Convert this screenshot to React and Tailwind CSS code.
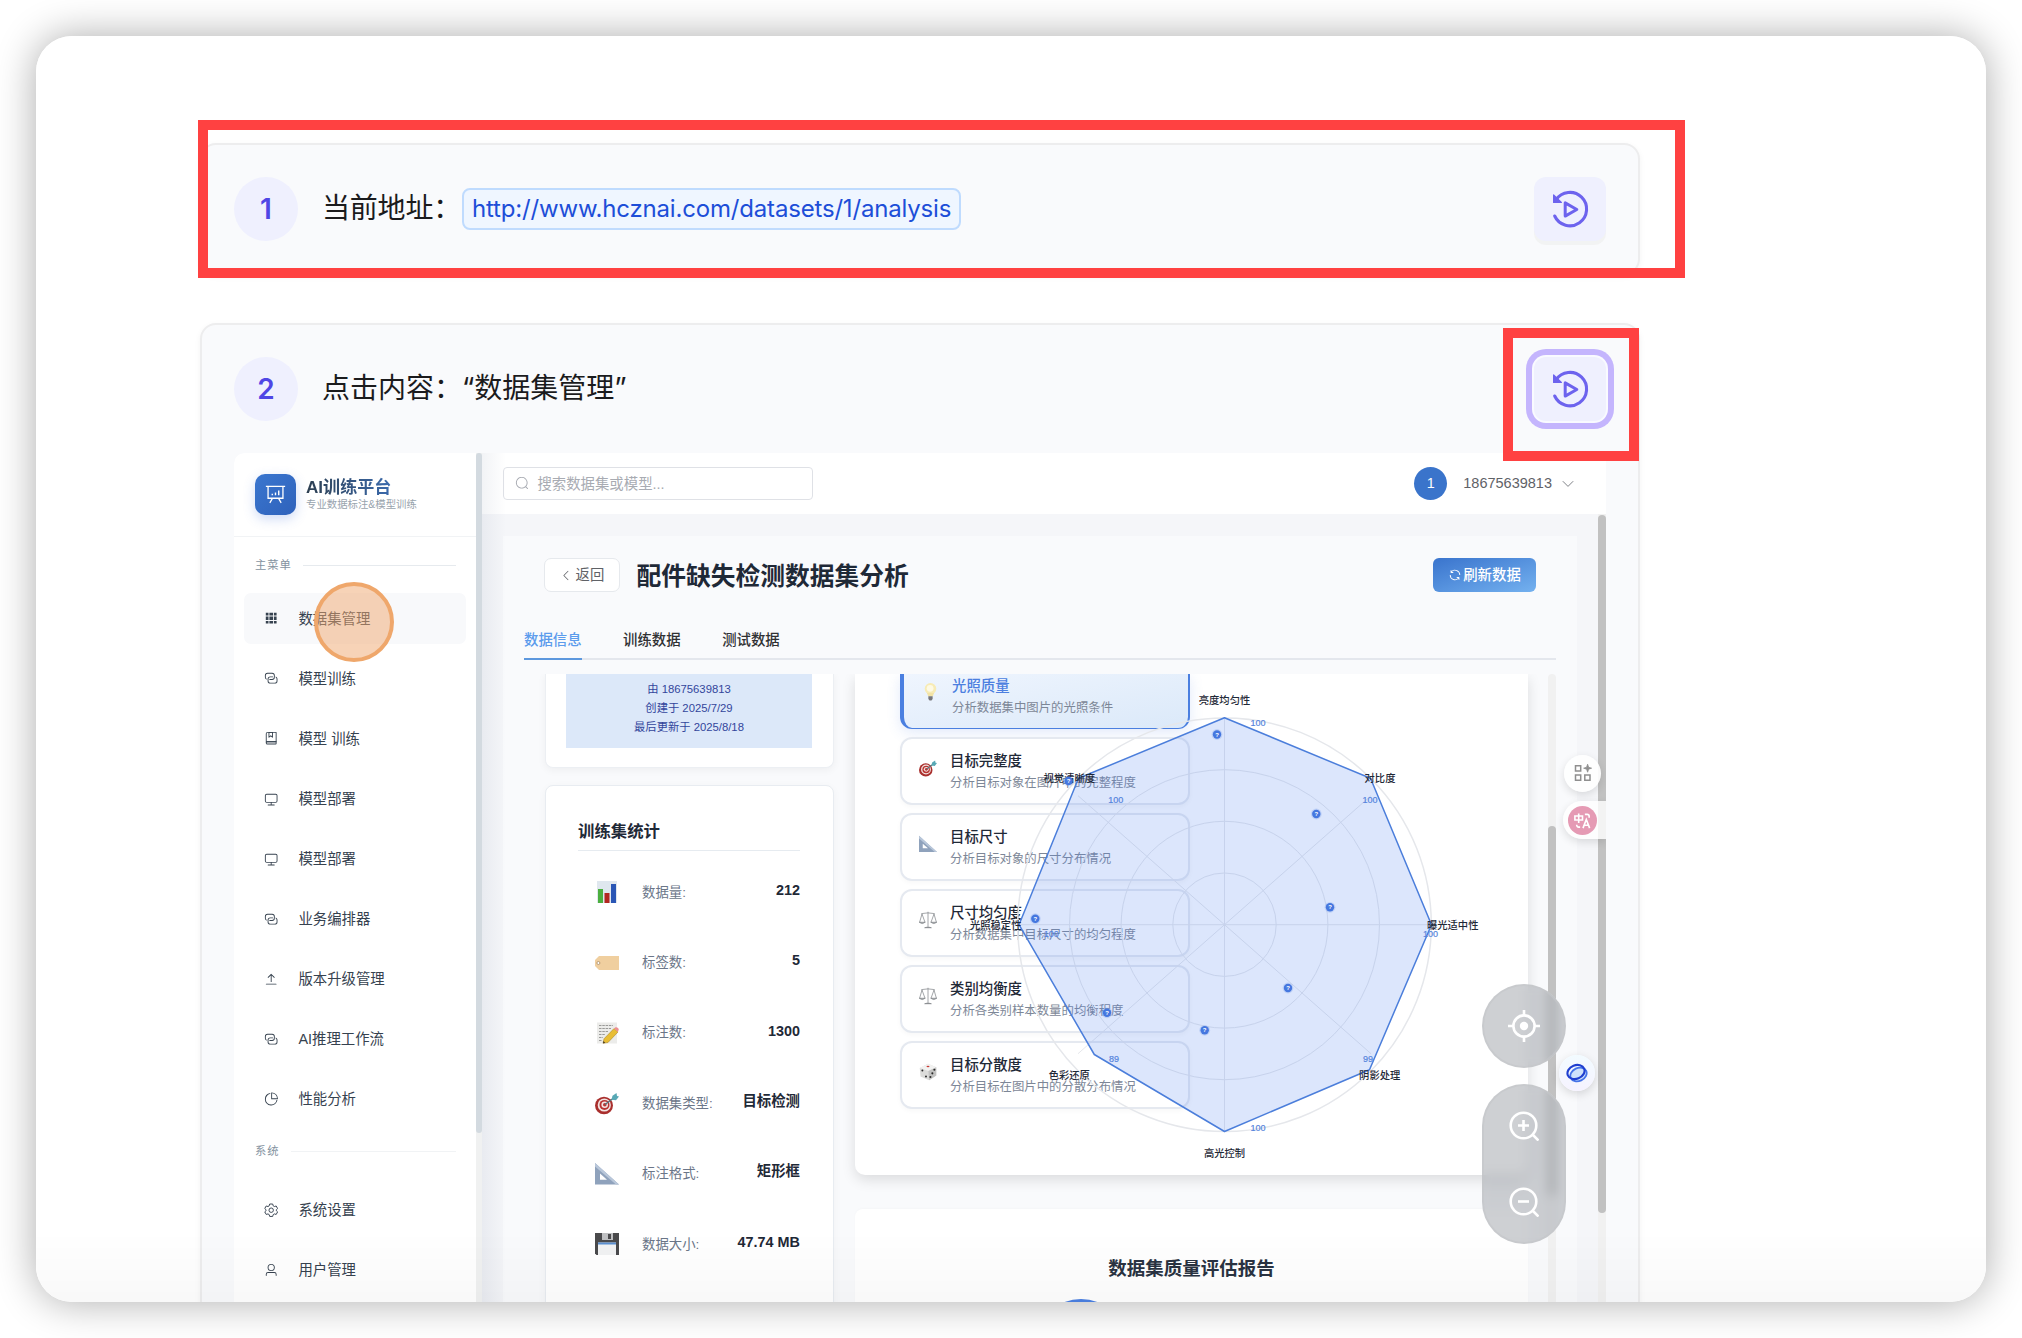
import React from "react";

const FONT = "font-['Liberation_Sans','Noto_Sans_CJK_SC',sans-serif]";

/* ---------- icons ---------- */

const GLYPHS = {
  grid: ["M640 384v256H384V384zm64 0h192v256H704zm-64 512H384V704h256zm64 0V704h192v192zm-64-768v192H384V128zm64 0h192v192H704zM320 384v256H128V384zm0 512H128V704h192zm0-768v192H128V128z"],
  connection: [
    "M640 384v64H448a128 128 0 0 0-128 128v128a128 128 0 0 0 128 128h320a128 128 0 0 0 128-128V576a128 128 0 0 0-64-110.848V394.88c74.56 26.368 128 97.472 128 181.056v128a192 192 0 0 1-192 192H448a192 192 0 0 1-192-192V576a192 192 0 0 1 192-192z",
    "M384 640v-64h192a128 128 0 0 0 128-128V320a128 128 0 0 0-128-128H256a128 128 0 0 0-128 128v128a128 128 0 0 0 64 110.848v70.272A192.064 192.064 0 0 1 64 448V320a192 192 0 0 1 192-192h320a192 192 0 0 1 192 192v128a192 192 0 0 1-192 192z",
  ],
  collection: [
    "M192 736h640V128H256a64 64 0 0 0-64 64zm64-672h608a32 32 0 0 1 32 32v672a32 32 0 0 1-32 32H160l-32 57.536V192A128 128 0 0 1 256 64",
    "M240 800a48 48 0 1 0 0 96h592v-96zm0-64h656v160a64 64 0 0 1-64 64H240a112 112 0 0 1 0-224m144-608v250.88l96-76.8 96 76.8V128zm-64-64h320v381.44a32 32 0 0 1-51.968 24.96L480 384l-108.032 86.4A32 32 0 0 1 320 445.44z",
  ],
  monitor: ["M544 768v128h192a32 32 0 1 1 0 64H288a32 32 0 1 1 0-64h192V768H192A128 128 0 0 1 64 640V256a128 128 0 0 1 128-128h640a128 128 0 0 1 128 128v384a128 128 0 0 1-128 128zM192 192a64 64 0 0 0-64 64v384a64 64 0 0 0 64 64h640a64 64 0 0 0 64-64V256a64 64 0 0 0-64-64z"],
  upload: ["M160 832h704a32 32 0 1 1 0 64H160a32 32 0 1 1 0-64m384-578.304V704h-64V247.296L300 424 255 379 508.800 128l260 254-45.300 45.200z"],
  pie: [
    "M448 68.48v64.832A384.128 384.128 0 0 0 512 896a384.128 384.128 0 0 0 378.688-320h64.768A448.128 448.128 0 0 1 64 512 448.128 448.128 0 0 1 448 68.48",
    "M576 97.28V448h350.72A384.064 384.064 0 0 0 576 97.28M512 64V33.152A448 448 0 0 1 990.848 512H512z",
  ],
  user: ["M512 512a192 192 0 1 0 0-384 192 192 0 0 0 0 384m0 64a256 256 0 1 1 0-512 256 256 0 0 1 0 512m320 320v-96a96 96 0 0 0-96-96H288a96 96 0 0 0-96 96v96a32 32 0 1 1-64 0v-96a160 160 0 0 1 160-160h448a160 160 0 0 1 160 160v96a32 32 0 1 1-64 0"],
  search: ["m795.904 750.72 124.992 124.928a32 32 0 0 1-45.248 45.248L750.656 795.904a416 416 0 1 1 45.248-45.248zM480 832a352 352 0 1 0 0-704 352 352 0 0 0 0 704"],
  left: ["M609.408 149.376 277.76 489.6a32 32 0 0 0 0 44.672l331.648 340.352a29.12 29.12 0 0 0 41.728 0 30.59 30.59 0 0 0 0-42.752L339.264 511.936l311.872-319.872a30.59 30.59 0 0 0 0-42.688 29.12 29.12 0 0 0-41.728 0"],
  refresh: ["M771.776 794.88A384 384 0 0 1 128 512h64a320 320 0 0 0 555.712 216.448H654.72a32 32 0 1 1 0-64h149.056a32 32 0 0 1 32 32v148.928a32 32 0 1 1-64 0v-50.56zM276.288 295.616h92.992a32 32 0 0 1 0 64H220.16a32 32 0 0 1-32-32V178.56a32 32 0 0 1 64 0v50.56A384 384 0 0 1 896.128 512h-64a320 320 0 0 0-555.776-216.384z"],
};

function Glyph({ name, className }) {
  if (name === "gear") {
    return (
      <svg viewBox="0 0 24 24" className={className} fill="none" stroke="currentColor" strokeWidth="1.6" strokeLinejoin="round">
        <path d="M9.5 1.9h5l.8 3 2 1.2 3-.9 2.4 4.300-2.200 2.100v1.300l2.200 2.100-2.400 4.300-3-.9-2 1.200-.8 3h-5l-.8-3-2-1.200-3 .9-2.400-4.300 2.200-2.100v-1.300l-2.200-2.100 2.400-4.300 3 .9 2-1.200z" transform="translate(0 -.2)" />
        <circle cx="12" cy="12" r="3.700" />
      </svg>
    );
  }
  return (
    <svg viewBox="0 0 1024 1024" className={className} fill="currentColor">
      {GLYPHS[name].map((d) => (
        <path key={d} d={d} />
      ))}
    </svg>
  );
}

function ReplayIcon() {
  return (
    <svg viewBox="0 0 36 36" className="h-9 w-9 overflow-visible" fill="none" stroke="#6d63ee" strokeLinejoin="round" strokeLinecap="round">
      <path d="M2.700 25A16.700 16.700 0 1 0 4 8.800" strokeWidth="3.100" />
      <path d="M1.600 4v7.400h7.800z" fill="#6d63ee" strokeWidth="1.200" />
      <path d="M13.200 11.900v13.200l11.600-6.600z" strokeWidth="3" />
    </svg>
  );
}

function Emoji({ name, className }) {
  const art = {
    chart: (
      <>
        <rect x="2" y="1" width="20" height="22" fill="#dfe7ee" />
        <rect x="3" y="9" width="5" height="14" fill="#4caf3f" />
        <rect x="9.500" y="13" width="5" height="10" fill="#b32720" />
        <rect x="16" y="4" width="5" height="19" fill="#2a56b5" />
      </>
    ),
    tag: (
      <>
        <path d="M4 5h20v14H4l-4-4V9z" fill="#f0cf9f" />
        <circle cx="3.400" cy="12" r="1.500" fill="#fff" stroke="#a98c66" strokeWidth=".8" />
      </>
    ),
    memo: (
      <>
        <rect x="2" y="1.500" width="20" height="21" fill="#ececea" />
        <path d="M4 4.500h14M4 7.500h12M4 10.500h9M4 13.500h6M4 16.500h4M4 19.500h3" stroke="#9a9a98" strokeWidth="1" strokeDasharray="2.500 .8" />
        <path d="M19 7.500l4 3.500-10 10.500-5 .8 1-4.500z" fill="#e8bd35" stroke="#9c7a1d" strokeWidth=".5" />
        <path d="M19 7.500l1.500-1.200q2-.6 3.300 1.700l-.8 3z" fill="#ee8f92" />
        <path d="M8 22.300l.6-2.200 1.500 1.800z" fill="#3c3226" />
      </>
    ),
    target: (
      <>
        <ellipse cx="9" cy="14.500" rx="9" ry="8.700" fill="#a92f2d" />
        <circle cx="9.300" cy="14" r="6.600" fill="#f3e4e2" />
        <circle cx="9.500" cy="13.900" r="5" fill="#b93431" />
        <circle cx="9.700" cy="13.800" r="3.300" fill="#f3e4e2" />
        <circle cx="9.800" cy="13.700" r="1.800" fill="#b93431" />
        <path d="M10 13.500L20 6" stroke="#57727a" strokeWidth="1.400" />
        <path d="M16.500 8.800l1-4L21.500 2l.5 3 2 .4-3 3.800z" fill="#58a9b5" />
      </>
    ),
    ruler: (
      <>
        <path d="M0 1l24 21.500H0z" fill="#8fa2bc" />
        <path d="M0 1l24 21.500h-3L0 4.500z" fill="#b9c7da" />
        <path d="M5 11.500v6.300h7z" fill="#fff" />
      </>
    ),
    floppy: (
      <>
        <path d="M0 1h24v22H1.500L0 21.500z" fill="#4a4a4c" />
        <rect x="7" y="1" width="11" height="7" fill="#bfc0c2" />
        <rect x="13" y="2" width="3" height="5" fill="#4b4b4d" />
        <rect x="3" y="10.500" width="18" height="12.500" fill="#f1f2f3" />
        <rect x="3" y="10.500" width="18" height="2" fill="#5b8fd0" />
      </>
    ),
    bulb: (
      <>
        <circle cx="12" cy="8.500" r="7.300" fill="#f7ebb5" />
        <circle cx="11.500" cy="8" r="4.300" fill="#fdf9e4" />
        <path d="M7.500 14h9l-1.500 4H9z" fill="#f3e3a6" />
        <path d="M9.300 18h5.400v3.500l-1.500 2h-2.400l-1.500-2z" fill="#77777a" />
      </>
    ),
    scales: (
      <g fill="none" stroke="#858a8e" strokeWidth="1">
        <path d="M3 3.500l9-1 9 1M12 1v20M4 4L.8 15M4 4l4 11M20 4l-4 11M20 4l3.200 11" />
        <path d="M.3 15h8q-4 3.500-8 0zM15.700 15h8q-4 3.500-8 0z" fill="#aeb2b5" />
        <path d="M7.500 22.300q4.500-2 9 0z" fill="#777c80" />
      </g>
    ),
    dice: (
      <>
        <path d="M1 6.500L12 1l11 4.500v11L13.500 23 2 18z" fill="#dcdcda" />
        <path d="M1 6.500L12 1l11 4.500-10.500 5z" fill="#f2f2f1" />
        <path d="M12.500 10.500L23 5.500v11L13.500 23z" fill="#c2c2c1" />
        <ellipse cx="12" cy="4.500" rx="2" ry="1" fill="#c93a34" />
        <g fill="#2b2b2b">
          <circle cx="4.500" cy="10" r="1.300" />
          <circle cx="9.300" cy="18" r="1.300" />
          <circle cx="20.500" cy="9" r="1.400" />
          <circle cx="17.800" cy="13.800" r="1.400" />
          <circle cx="15.200" cy="18.600" r="1.400" />
        </g>
      </>
    ),
  };
  return (
    <svg viewBox="0 0 24 24" className={className}>
      {art[name]}
    </svg>
  );
}

/* ---------- sidebar ---------- */

const MENU = [
  ["grid", "数据集管理"],
  ["connection", "模型训练"],
  ["collection", "模型 训练"],
  ["monitor", "模型部署"],
  ["monitor", "模型部署"],
  ["connection", "业务编排器"],
  ["upload", "版本升级管理"],
  ["connection", "AI推理工作流"],
  ["pie", "性能分析"],
];
const SYSTEM = [
  ["gear", "系统设置"],
  ["user", "用户管理"],
];

function MenuItem({ icon, label, active }) {
  return (
    <div className={"flex h-[51px] shrink-0 items-center rounded-[7px] pl-5 text-[14.4px] leading-[20px] text-[#36424f] " + (active ? "bg-[#f8f9fb]" : "")}>
      <Glyph name={icon} className="h-[14.4px] w-[14.4px] shrink-0" />
      <span className="ml-5 whitespace-nowrap">{label}</span>
    </div>
  );
}

function GroupTitle({ children, light }) {
  return (
    <div className="flex h-4 items-center gap-[11px] pl-[21px] pr-5 text-[11.3px] tracking-[1px] text-[#8492a0]">
      <span className="whitespace-nowrap">{children}</span>
      <div className={"h-px flex-1 " + (light ? "bg-[#f1f3f5]" : "bg-[#e6eaee]")} />
    </div>
  );
}

function Sidebar() {
  return (
    <div className="flex w-[248px] shrink-0">
      <aside className="w-[242px] rounded-tl-[10px] bg-white">
        <div className="flex h-[84px] items-start border-b border-[#f1f3f5] pl-[21px] pt-[21px]">
          <div className="flex h-[41px] w-[41px] items-center justify-center rounded-[10px] bg-linear-to-br from-[#3a76cf] to-[#2f62bb] shadow-[0_4px_12px_rgba(64,110,220,0.25)]">
            <svg viewBox="0 0 24 24" className="h-[21px] w-[21px]" fill="none" stroke="#fff" strokeWidth="1.500">
              <path d="M1 2.800h22M3.500 2.800v13.500h17V2.800M8.500 16.500l-3 5M15.500 16.500l3 5" />
              <path d="M8.300 12.800v-1.600M12 12.800V9.600M15.700 12.800V7.400" strokeWidth="1.600" />
            </svg>
          </div>
          <div className="ml-[10px] mt-[2px]">
            <div className="whitespace-nowrap bg-linear-to-r from-[#2c3e50] to-[#3f78cc] bg-clip-text text-[17.100px] font-bold leading-[24px] text-transparent">AI训练平台</div>
            <div className="-mt-px whitespace-nowrap text-[10.400px] leading-[12px] text-[#98a3ad]">专业数据标注&amp;模型训练</div>
          </div>
        </div>
        <div className="mt-5">
          <GroupTitle>主菜单</GroupTitle>
        </div>
        <div className="mt-[20px] flex flex-col gap-[9.100px] px-[10px]">
          {MENU.map(([icon, label], i) => (
            <MenuItem key={i} icon={icon} label={label} active={i === 0} />
          ))}
        </div>
        <div className="mt-[19px]">
          <GroupTitle light>系统</GroupTitle>
        </div>
        <div className="mt-[25px] flex flex-col gap-[9px] px-[10px]">
          {SYSTEM.map(([icon, label]) => (
            <MenuItem key={label} icon={icon} label={label} />
          ))}
        </div>
      </aside>
      <div className="w-[6px] bg-[#f0f1f1]">
        <div className="h-[680px] rounded-[3px] bg-[#d3dae0]" />
      </div>
    </div>
  );
}

/* ---------- main area ---------- */

const STATS = [
  ["chart", "数据量:", "212"],
  ["tag", "标签数:", "5"],
  ["memo", "标注数:", "1300"],
  ["target", "数据集类型:", "目标检测"],
  ["ruler", "标注格式:", "矩形框"],
  ["floppy", "数据大小:", "47.74 MB"],
];

const METRICS = [
  ["target", "目标完整度", "分析目标对象在图片中的完整程度"],
  ["ruler", "目标尺寸", "分析目标对象的尺寸分布情况"],
  ["scales", "尺寸均匀度", "分析数据集中目标尺寸的均匀程度"],
  ["scales", "类别均衡度", "分析各类别样本数量的均衡程度"],
  ["dice", "目标分散度", "分析目标在图片中的分散分布情况"],
];

const RADAR_LABELS = [
  [369.500, 26.500, "亮度均匀性"],
  [525, 104.500, "对比度"],
  [597.700, 251.500, "曝光适中性"],
  [524.700, 401.500, "阴影处理"],
  [369.500, 479.500, "高光控制"],
  [214.300, 401.500, "色彩还原"],
  [140.700, 251.500, "光照稳定性"],
  [214.300, 104.500, "视觉清晰度"],
];
const RADAR_VALUES = [
  [403, 48.500, "100"],
  [515, 126, "100"],
  [575.500, 260, "100"],
  [513, 384.500, "99"],
  [403, 454, "100"],
  [259, 384.500, "89"],
  [196.300, 260, "100"],
  [260.700, 126, "100"],
];
const RADAR_BADGES = [
  [362, 60.500],
  [461.300, 140],
  [475, 233.300],
  [433, 314],
  [349.700, 356.300],
  [252, 338.800],
  [180.300, 244.700],
  [213.500, 107],
];

function Radar() {
  const cx = 369.5;
  const cy = 250.7;
  return (
    <svg width="674" height="501" viewBox="0 0 674 501" className="absolute left-0 top-0">
      <circle cx={cx} cy={cy} r="206.800" fill="none" stroke="#e5e7eb" strokeWidth="1.500" />
      <g fill="none" stroke="#e5e7eb" strokeWidth="1">
        <circle cx={cx} cy={cy} r="51.700" />
        <circle cx={cx} cy={cy} r="103.400" />
        <circle cx={cx} cy={cy} r="155" />
        <path d={`M${cx} 44v413.500M163 ${cy}h413.500M${cx - 146.500} ${cy - 129}l293 258M${cx - 146.500} ${cy + 129}l293-258`} />
      </g>
      <polygon
        points="369.500,43.700 515.500,104.300 576.500,250.700 514.500,395.700 369.500,457.500 239.300,380.500 164,250.700 223.500,104.300"
        fill="rgba(79,129,240,0.2)"
        stroke="#4b7edb"
        strokeWidth="1.500"
        strokeLinejoin="round"
      />
      <g fill="#5584dc" stroke="#5584dc" strokeWidth=".2" fontSize="9" textAnchor="middle">
        {RADAR_VALUES.map(([x, y, t]) => (
          <text key={x + t + y} x={x} y={y + 3.1}>{t}</text>
        ))}
      </g>
      <g fill="#1f2937" fontSize="10.300" fontWeight="500" textAnchor="middle">
        {RADAR_LABELS.map(([x, y, t]) => (
          <text key={t} x={x} y={y + 3.7}>{t}</text>
        ))}
      </g>
      {RADAR_BADGES.map(([x, y]) => (
        <g key={x}>
          <circle cx={x} cy={y} r="5.400" fill="#4d7fe3" opacity=".2" />
          <circle cx={x} cy={y} r="4.200" fill="#4577df" />
          <text x={x} y={y + 2.1} fill="#fff" fontSize="6" fontWeight="bold" textAnchor="middle">?</text>
        </g>
      ))}
    </svg>
  );
}

function InfoColumn() {
  return (
    <div className="ml-[20.500px] flex w-[289px] shrink-0 flex-col">
      <div className="h-[94px] shrink-0 rounded-b-lg border-x border-b border-[#eceff3] bg-white px-[20.500px] shadow-[0_2px_8px_rgba(0,0,0,0.05)]">
        <div className="flex h-[74px] flex-col items-center bg-[#dce8f9] pt-[6px] text-[11.300px] leading-[19px] text-[#33469c]">
          <span>由 18675639813</span>
          <span>创建于 2025/7/29</span>
          <span>最后更新于 2025/8/18</span>
        </div>
      </div>
      <div className="mt-[17px] flex-1 rounded-t-lg border border-[#e8ecf1] bg-white px-[32.500px] pt-[33px] shadow-[0_2px_8px_rgba(0,0,0,0.04)]">
        <div className="h-[32px] border-b border-[#e6ebf0] text-[16.400px] font-bold leading-[24px] text-[#1f2937]">训练集统计</div>
        <div className="mt-[6px] flex flex-col">
          {STATS.map(([icon, label, value]) => (
            <div key={label} className="flex h-[70.400px] items-center pl-[16.500px]">
              <Emoji name={icon} className="h-6 w-6" />
              <span className="ml-[23.500px] mt-[1px] flex-1 text-[13.400px] text-[#6b7688]">{label}</span>
              <span className="mb-[3px] text-[14.400px] font-bold text-[#1f2937]">{value}</span>
            </div>
          ))}
        </div>
      </div>
    </div>
  );
}

function ReportColumn() {
  return (
    <div className="ml-[21.500px] flex w-[673px] shrink-0 flex-col">
      <div className="relative h-[501px] shrink-0 rounded-b-[10px] bg-white pl-[45px] shadow-[0_5px_14px_rgba(0,0,0,0.12)]">
        <div className="flex w-[290px] flex-col gap-2">
          <div className="flex h-[55px] rounded-b-xl border-b border-l-4 border-r-2 border-[#4a7fe0] bg-linear-to-br from-[#eff5fe] to-[#dbe9f9] pl-[16.500px] shadow-[0_4px_14px_rgba(74,127,224,0.16)]">
            <Emoji name="bulb" className="mt-[8px] h-[19px] w-[19px]" />
            <div className="ml-[12.500px] mt-[1px] whitespace-nowrap">
              <div className="text-[14.400px] font-medium leading-[22px] text-[#4c7fe0]">光照质量</div>
              <div className="text-[12.400px] leading-[22px] text-[#7d8797]">分析数据集中图片的光照条件</div>
            </div>
          </div>
          {METRICS.map(([icon, title, desc]) => (
            <div key={title} className="flex h-[68px] rounded-xl border-2 border-[#e5e9f0] bg-white pl-[17px] shadow-[0_2px_5px_rgba(0,0,0,0.03)]">
              <Emoji name={icon} className="mt-[20px] h-[18px] w-[18px]" />
              <div className="ml-[13px] mt-[11px] whitespace-nowrap">
                <div className="text-[14.400px] font-medium leading-[22px] text-[#1f2937]">{title}</div>
                <div className="text-[12.400px] leading-[22px] text-[#7d8797]">{desc}</div>
              </div>
            </div>
          ))}
        </div>
        <Radar />
      </div>
      <div className="mt-[34px] flex flex-1 flex-col items-center rounded-t-lg bg-white pt-[46px] shadow-[0_-1px_3px_rgba(0,0,0,0.02)]">
        <div className="text-[18.500px] font-bold leading-[28px] text-[#2a3342]">数据集质量评估报告</div>
        <div className="mr-[221px] mt-[16px] h-[92px] w-[92px] shrink-0 rounded-full bg-[#4b80e2]" />
      </div>
    </div>
  );
}

function MapButtons() {
  return (
    <div className="absolute left-[1000px] top-[531px] flex flex-col gap-[16px] text-white">
      <div className="flex h-[84px] w-[84px] items-center justify-center rounded-full border-2 border-[#c4c6c9]/60 bg-[#858992]/40 backdrop-blur-[6px]">
        <svg viewBox="0 0 32 32" className="h-8 w-8" fill="none" stroke="currentColor" strokeWidth="2.600">
          <circle cx="16" cy="16" r="10.600" />
          <circle cx="16" cy="16" r="4.200" fill="currentColor" stroke="none" />
          <path d="M16 0v6M16 26v6M0 16h6M26 16h6" />
        </svg>
      </div>
      <div className="flex h-[160px] w-[84px] flex-col items-center gap-[46px] rounded-[42px] border-2 border-[#c4c6c9]/60 bg-[#858992]/40 pt-[25px] backdrop-blur-[6px]">
        {["M9 14.500h11M14.500 9v11", "M9 14.500h11"].map((d) => (
          <svg key={d} viewBox="0 0 30 30" className="h-[30px] w-[30px] shrink-0" fill="none" stroke="currentColor" strokeWidth="2.600">
            <circle cx="14.500" cy="14.500" r="12.800" />
            <path d="M23.500 23.500L29.500 29.500" />
            <path d={d} />
          </svg>
        ))}
      </div>
    </div>
  );
}

function FloatingTools() {
  return (
    <>
      <div className="absolute left-[1082px] top-[301.500px] flex h-[37px] w-[37px] items-center justify-center rounded-full bg-white/90 shadow-[0_3px_8px_rgba(0,0,0,0.12)]">
        <svg viewBox="0 0 18 18" className="h-[18px] w-[18px]" fill="none" stroke="#8f8f8f" strokeWidth="1.500">
          <path d="M1.500 1.800h5.200v5.200H1.500zM1.500 11h5.200v5.200H1.500zM10.800 11H16v5.200h-5.200z" />
          <path d="M13.600.2l1 3 3 1-3 1-1 3-1-3-3-1 3-1z" fill="#8f8f8f" strokeWidth=".8" />
        </svg>
      </div>
      <div className="absolute left-[1081px] top-[348px] flex h-[38px] w-[43px] items-center rounded-l-full bg-white/80 pl-[5px] shadow-[0_3px_8px_rgba(0,0,0,0.12)]">
        <div className="flex h-[29px] w-[29px] items-center justify-center rounded-full bg-[#e59ab4]">
          <svg viewBox="0 0 20 20" className="h-[19px] w-[19px]" fill="none" stroke="#fff" strokeWidth="1.700">
            <path d="M2 5.200h8v4.300H2zM6 2.500v10M12.500 3.500h2.500q2 0 2 2V7M7.500 17H6q-2 0-2.200-2.500M10.500 18l3.500-9 3.500 9M11.800 15h4.400" />
          </svg>
        </div>
      </div>
      <div className="absolute left-[1077px] top-[602px] flex h-[36px] w-[36px] items-center justify-center rounded-full bg-linear-to-b from-[#f2fbff] to-[#f6f3ff] shadow-[0_3px_10px_rgba(0,0,0,0.14)]">
        <svg viewBox="0 0 22 20" className="h-5 w-[22px]" fill="none">
          <ellipse cx="12.500" cy="11.500" rx="8.500" ry="6.500" transform="rotate(-25 12.500 11.500)" stroke="#4573e8" strokeWidth="1.800" fill="#cfe2fb" />
          <ellipse cx="10" cy="9" rx="8.800" ry="6.800" transform="rotate(-22 10 9)" stroke="#1f3fd0" strokeWidth="2.100" />
        </svg>
      </div>
    </>
  );
}

function MainArea() {
  return (
    <div className="relative flex w-[1124px] flex-col bg-[#f5f6f9]">
      <header className="flex h-[61px] shrink-0 items-center bg-white pl-[21px] pr-[32px]">
        <div className="flex h-[33px] w-[310px] items-center rounded border border-[#dfe1e6] bg-white pl-[11px] text-[14.400px] text-[#a8abb2]">
          <Glyph name="search" className="h-[14.400px] w-[14.400px]" />
          <span className="ml-[8px] mt-[2px]">搜索数据集或模型...</span>
        </div>
        <div className="ml-auto flex items-center">
          <div className="flex h-[33px] w-[33px] items-center justify-center rounded-full bg-[#3a74cb] text-[14.400px] text-white">1</div>
          <span className="ml-4 mt-[1px] text-[14.500px] text-[#5f6267]">18675639813</span>
          <svg viewBox="0 0 12 12" className="ml-[10px] h-3 w-3" fill="none" stroke="#707379" strokeWidth=".9">
            <path d="M.8 3.200l5.200 5.200 5.200-5.200" />
          </svg>
        </div>
      </header>
      <div className="flex min-h-0 flex-1 pl-[21px] pt-[22px]">
        <div className="flex w-[1074px] flex-col bg-[#f9fafc] px-[21px] pt-[22px]">
          <div className="flex h-[34px] shrink-0 items-center pl-[20px] pr-5">
            <div className="flex h-[34px] w-[76px] items-center justify-center gap-[3px] rounded-[7px] border border-[#e6e9ed] bg-white text-[14.400px] text-[#5f6267]">
              <Glyph name="left" className="h-[13px] w-[13px]" />
              <span className="mt-[2px]">返回</span>
            </div>
            <h1 className="ml-[16.500px] mt-[3px] text-[24.750px] font-bold leading-[34px] text-[#1f2937]">配件缺失检测数据集分析</h1>
            <div className="ml-auto flex h-[34px] w-[103px] items-center justify-center gap-[1px] rounded-[6px] bg-linear-to-br from-[#3a74cd] to-[#74b1ef] text-[14.400px] font-medium text-white">
              <Glyph name="refresh" className="h-[14px] w-[14px]" />
              <span className="mt-[2px]">刷新数据</span>
            </div>
          </div>
          <div className="flex h-[68px] shrink-0 gap-[41.500px] border-b-2 border-[#e4e7ed] text-[14.400px] font-medium text-[#303133]">
            <div className="-mb-[2px] flex h-[68px] items-end border-b-2 border-[#5d98de] pb-[7px] leading-[22px] text-[#5b9bec]">数据信息</div>
            <div className="flex items-end pb-[7px] leading-[22px]">训练数据</div>
            <div className="flex items-end pb-[7px] leading-[22px]">测试数据</div>
          </div>
          <div className="mt-[14px] flex min-h-0 flex-1 overflow-hidden">
            <InfoColumn />
            <ReportColumn />
            <div className="ml-auto w-2 rounded-t bg-[#f1f1f1]">
              <div className="mt-[152px] h-[370px] rounded bg-[#c1c1c1]" />
            </div>
          </div>
        </div>
        <div className="-mt-[22px] ml-[21px] w-2 bg-[#f1f1f1] pt-[1px]">
          <div className="h-[698px] rounded bg-[#c1c1c1]" />
        </div>
      </div>
      <div className="absolute inset-y-0 left-0 w-6 bg-linear-to-r from-[#5b6b8c]/8 to-transparent" />
      <MapButtons />
      <FloatingTools />
    </div>
  );
}

/* ---------- step cards ---------- */

function StepHeader({ number, focused, children }) {
  return (
    <div className="flex h-16 items-center">
      <div className="flex h-16 w-16 items-center justify-center rounded-full bg-[#eff0fe] text-[28px] font-semibold text-[#4f46e5]">{number}</div>
      <div className="ml-[24px] flex items-center whitespace-nowrap text-[28px] leading-[40px] text-[#1b1b1d]">{children}</div>
      <div
        className={
          "ml-auto flex h-16 w-[72px] items-center justify-center rounded-xl bg-[#eff0fe] " +
          (focused ? "shadow-[0_0_0_2px_#f9faff,0_0_0_8px_#c4b5fd]" : "shadow-[0_4px_0_rgba(240,240,240,0.7)]")
        }
      >
        <ReplayIcon />
      </div>
    </div>
  );
}

const CARD = "w-[1440px] border-2 border-[#ededee] bg-[#f9fafc] px-8 pt-8 rounded-2xl shadow-[0_2px_6px_rgba(0,0,0,0.05)]";

export default function App() {
  return (
    <div className="h-[1338px] w-[2022px] overflow-hidden bg-white p-9 font-['Inter','Noto_Sans_CJK_SC',sans-serif]">
      <div className="relative h-[1266px] w-[1950px] rounded-[36px] shadow-[0_0_40px_rgba(0,0,0,0.33)]">
        <div className="h-full w-full overflow-hidden rounded-[36px] bg-white pl-[164px] pt-[107px]">
          <section className={CARD + " h-[132px]"}>
            <StepHeader number="1">
              <span className="-mt-[3px] w-[140px] tracking-[-0.2px]">当前地址：</span>
              <span className="flex h-[42px] items-center rounded-lg border-2 border-[#bfdbfe] bg-[#eff6ff] px-2 text-[24px] tracking-[-0.18px] text-[#1d4ed8]">http://www.hcznai.com/datasets/1/analysis</span>
            </StepHeader>
          </section>
          <section className={CARD + " mt-12 h-[1100px]"}>
            <StepHeader number="2" focused>
              <span className="-mt-[3px]">点击内容：“数据集管理”</span>
            </StepHeader>
            <div className={"relative mt-8 flex h-[900px] w-[1372px] overflow-hidden rounded-tl-[10px] " + FONT}>
              <Sidebar />
              <MainArea />
              <div className="absolute left-[80px] top-[129px] h-20 w-20 rounded-full border-4 border-[#efa76b] bg-[#f0a870]/50" />
            </div>
          </section>
        </div>
        <div className="absolute inset-x-0 bottom-0 h-[70px] rounded-b-[36px] bg-linear-to-b from-transparent to-black/[0.025]" />
        <div className="absolute left-[162px] top-[83.500px] h-[158.500px] w-[1487px] border-[10px] border-[#ff4141]" />
        <div className="absolute left-[1467px] top-[292px] h-[133px] w-[135.500px] border-[10px] border-[#ff4141]" />
      </div>
    </div>
  );
}
